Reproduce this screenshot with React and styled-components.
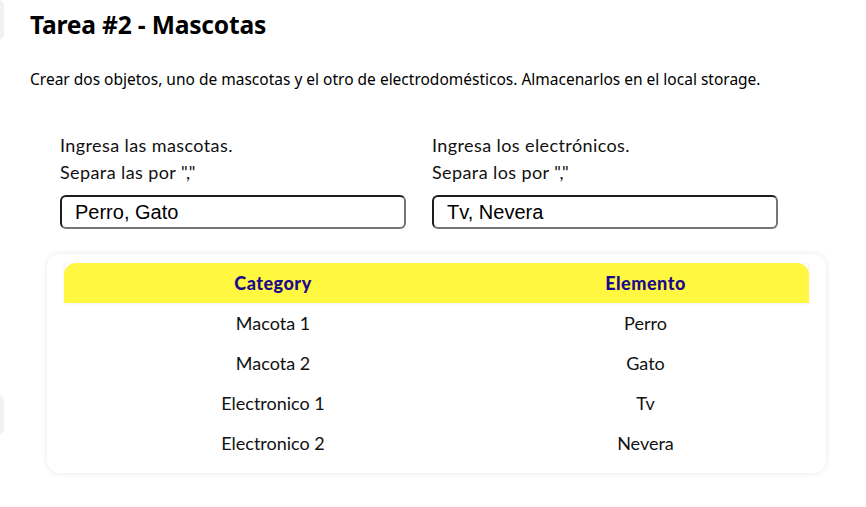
import React from "react";
import styled, { createGlobalStyle } from "styled-components";

const Global = createGlobalStyle`
  html, body { margin: 0; padding: 0; background: #ffffff; }
  body { font-family: "Noto Sans", "Open Sans", sans-serif; color: #000; }
`;

const Page = styled.main`
  position: relative;
  padding: 8px 30px 30px 30px;
  box-sizing: border-box;
  width: 866px;
  min-height: 507px;
`;

const EdgeTab = styled.div`
  position: absolute;
  left: -8px;
  top: ${(p) => p.$top}px;
  width: 12px;
  height: 40px;
  border-radius: 6px;
  background: #f2f2f2;
`;

const Title = styled.h1`
  margin: 0;
  font-family: "Noto Sans", sans-serif;
  font-weight: 700;
  font-size: 24.6px;
  line-height: 34px;
  letter-spacing: -0.2px;
`;

const Description = styled.p`
  margin: 26px 0 0 0;
  font-family: "Noto Sans", sans-serif;
  font-size: 15.5px;
  line-height: 22px;
`;

const Form = styled.section`
  display: grid;
  grid-template-columns: 372px 372px;
  padding-left: 30px;
  margin-top: 42px;
`;

const Field = styled.label`
  display: flex;
  flex-direction: column;
`;

const LabelLine = styled.span`
  font-family: "Lato", "Noto Sans", sans-serif;
  font-size: 18px;
  letter-spacing: 0.4px;
  line-height: 27px;
  color: #111;
`;

const Input = styled.input`
  margin-top: 9px;
  width: 346px;
  height: 34px;
  box-sizing: border-box;
  border: 2px solid;
  border-color: #1c1c1c #767676 #767676 #1c1c1c;
  border-radius: 6px;
  padding: 0 13px;
  font-family: "Liberation Sans", Arial, sans-serif;
  font-size: 20px;
  color: #000;
  background: #fff;
  outline: none;
`;

const Card = styled.section`
  margin: 25px 0 0 17px;
  width: 779px;
  box-sizing: border-box;
  padding: 9px 17px 10px 17px;
  background: #fff;
  border-radius: 13px;
  box-shadow: 0 0 6px rgba(0, 0, 0, 0.09);
`;

const Table = styled.table`
  width: 745px;
  border-collapse: collapse;
  table-layout: fixed;
`;

const HeadRow = styled.tr`
  background: #fff740;
  box-shadow: 0 1px 2px rgba(0, 0, 0, 0.06);
`;

const HeadCell = styled.th`
  height: 40px;
  padding: 0;
  font-family: "Lato", "Noto Sans", sans-serif;
  font-weight: 900;
  font-size: 18px;
  letter-spacing: 0.5px;
  color: #1b0a8c;
  text-align: center;
  width: ${(p) => p.$w}px;
  border-top-left-radius: ${(p) => (p.$first ? 12 : 0)}px;
  border-top-right-radius: ${(p) => (p.$last ? 12 : 0)}px;
`;

const Cell = styled.td`
  height: 40px;
  padding: 0;
  text-align: center;
  font-family: "Lato", "Noto Sans", sans-serif;
  font-size: 18px;
  color: #111;
`;

const rows = [
  ["Macota 1", "Perro"],
  ["Macota 2", "Gato"],
  ["Electronico 1", "Tv"],
  ["Electronico 2", "Nevera"],
];

export default function App() {
  return (
    <Page>
      <Global />
      <EdgeTab $top={0} />
      <EdgeTab $top={395} />
      <Title>Tarea #2 - Mascotas</Title>
      <Description>
        Crear dos objetos, uno de mascotas y el otro de electrodomésticos. Almacenarlos en el local storage.
      </Description>
      <Form>
        <Field>
          <LabelLine>Ingresa las mascotas.</LabelLine>
          <LabelLine>Separa las por ","</LabelLine>
          <Input defaultValue="Perro, Gato" />
        </Field>
        <Field>
          <LabelLine>Ingresa los electrónicos.</LabelLine>
          <LabelLine>Separa los por ","</LabelLine>
          <Input defaultValue="Tv, Nevera" />
        </Field>
      </Form>
      <Card>
        <Table>
          <thead>
            <HeadRow>
              <HeadCell $w={418} $first>Category</HeadCell>
              <HeadCell $w={327} $last>Elemento</HeadCell>
            </HeadRow>
          </thead>
          <tbody>
            {rows.map(([a, b]) => (
              <tr key={a}>
                <Cell>{a}</Cell>
                <Cell>{b}</Cell>
              </tr>
            ))}
          </tbody>
        </Table>
      </Card>
    </Page>
  );
}
